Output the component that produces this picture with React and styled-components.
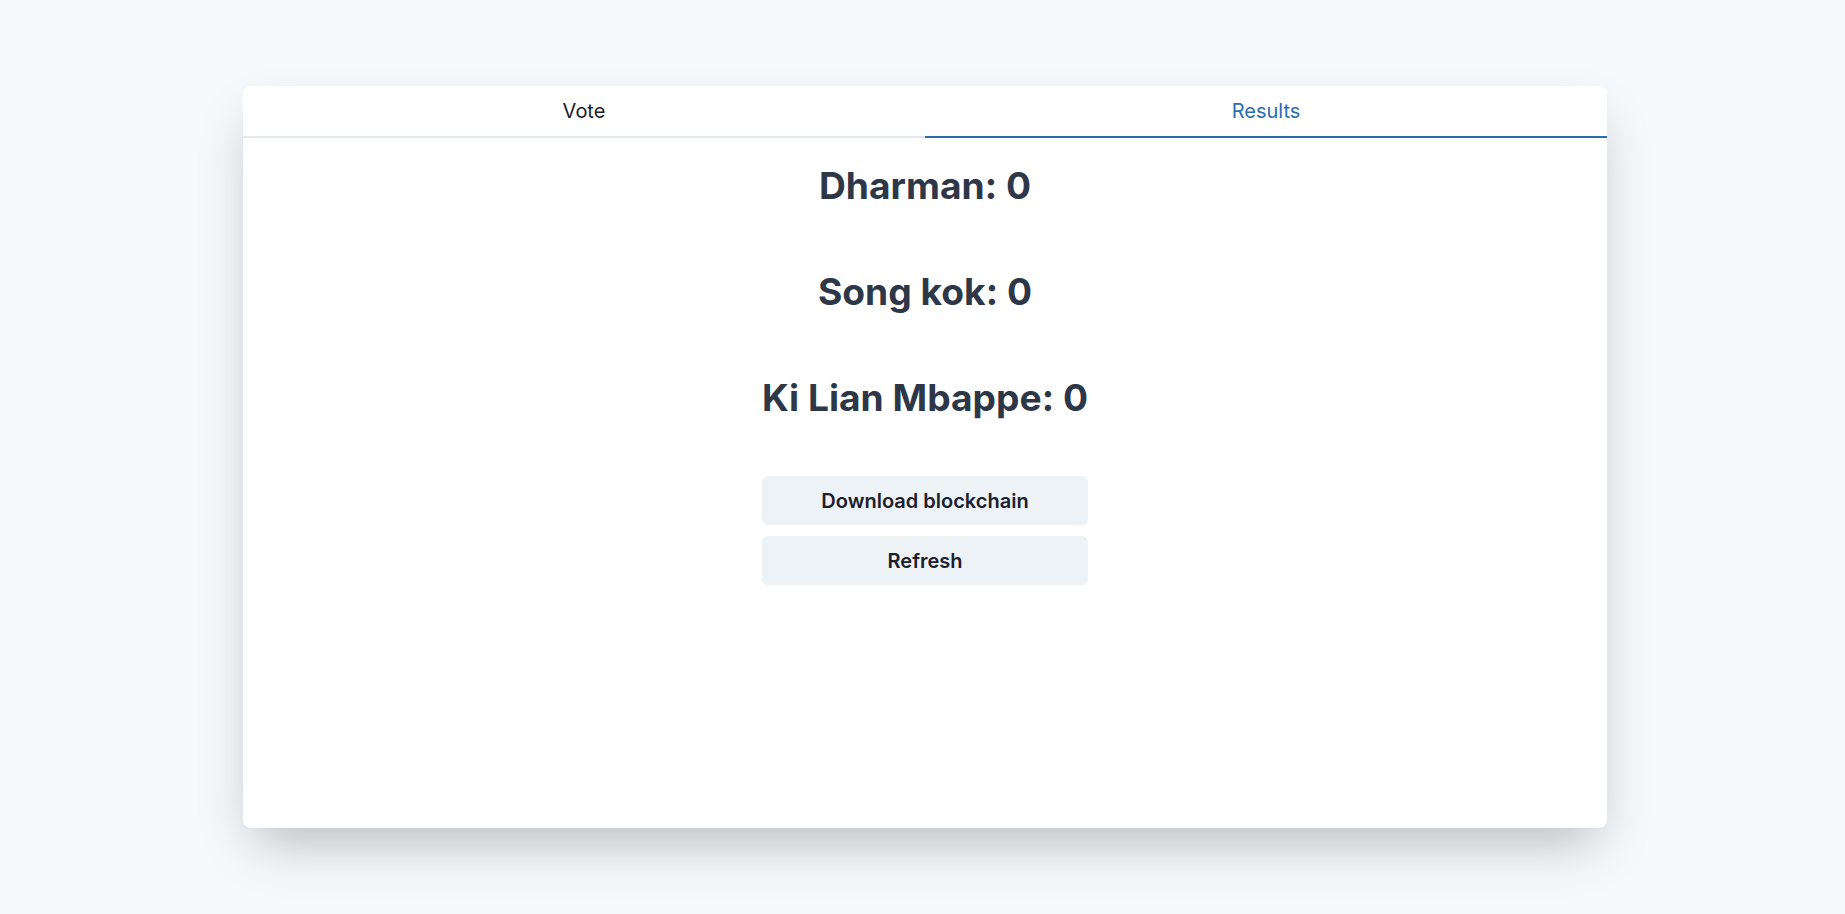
import React, { useState } from "react";
import styled, { createGlobalStyle } from "styled-components";

const Global = createGlobalStyle`
  html, body { margin: 0; padding: 0; }
  body {
    background: #f5f9fc;
    font-family: Inter, "Noto Sans", "Liberation Sans", sans-serif;
    color: #1a202c;
    -webkit-font-smoothing: antialiased;
  }
`;

const Page = styled.div`
  min-height: 914px;
  box-sizing: border-box;
  padding: 86px 0 0 5px;
  display: flex;
  justify-content: center;
  align-items: flex-start;
`;

const Card = styled.div`
  width: 1364px;
  height: 742px;
  background: #ffffff;
  border-radius: 8px;
  box-shadow: 0 25px 50px -12px rgba(0, 0, 0, 0.25);
  display: flex;
  flex-direction: column;
  overflow: hidden;
`;

const TabList = styled.div`
  display: flex;
  border-bottom: 2px solid #e2e8f0;
`;

const Tab = styled.button`
  flex: 1;
  appearance: none;
  background: transparent;
  border: none;
  border-bottom: 2px solid ${(p) => (p.$active ? "#2b6cb0" : "transparent")};
  margin-bottom: -2px;
  padding: 11px 16px;
  font-family: inherit;
  font-size: 20px;
  line-height: 28px;
  font-weight: 400;
  color: ${(p) => (p.$active ? "#2b6cb0" : "#1a202c")};
  cursor: pointer;
`;

const Panel = styled.div`
  display: flex;
  justify-content: center;
  padding-top: 25px;
`;

const Column = styled.div`
  display: flex;
  flex-direction: column;
  align-items: stretch;
`;

const Results = styled.div`
  display: flex;
  flex-direction: column;
  align-items: center;
  gap: 61px;
  margin-bottom: 56px;
`;

const Heading = styled.h2`
  margin: 0;
  font-size: 37.2px;
  line-height: 45px;
  font-weight: 700;
  color: #2d3748;
  white-space: nowrap;
`;

const Actions = styled.div`
  display: flex;
  flex-direction: column;
  gap: 11px;
`;

const Button = styled.button`
  appearance: none;
  border: none;
  height: 49px;
  border-radius: 6px;
  background: #edf2f7;
  color: #1a202c;
  font-family: inherit;
  font-size: 20px;
  font-weight: 600;
  cursor: pointer;
  &:hover { background: #e2e8f0; }
`;

const candidates = [
  { name: "Dharman", votes: 0 },
  { name: "Song kok", votes: 0 },
  { name: "Ki Lian Mbappe", votes: 0 },
];

export default function App() {
  const [tab, setTab] = useState(1);
  return (
    <>
      <Global />
      <Page>
        <Card>
          <TabList>
            <Tab $active={tab === 0} onClick={() => setTab(0)}>Vote</Tab>
            <Tab $active={tab === 1} onClick={() => setTab(1)}>Results</Tab>
          </TabList>
          <Panel>
            <Column>
              <Results>
                {candidates.map((c) => (
                  <Heading key={c.name}>
                    {c.name}: {c.votes}
                  </Heading>
                ))}
              </Results>
              <Actions>
                <Button>Download blockchain</Button>
                <Button>Refresh</Button>
              </Actions>
            </Column>
          </Panel>
        </Card>
      </Page>
    </>
  );
}
